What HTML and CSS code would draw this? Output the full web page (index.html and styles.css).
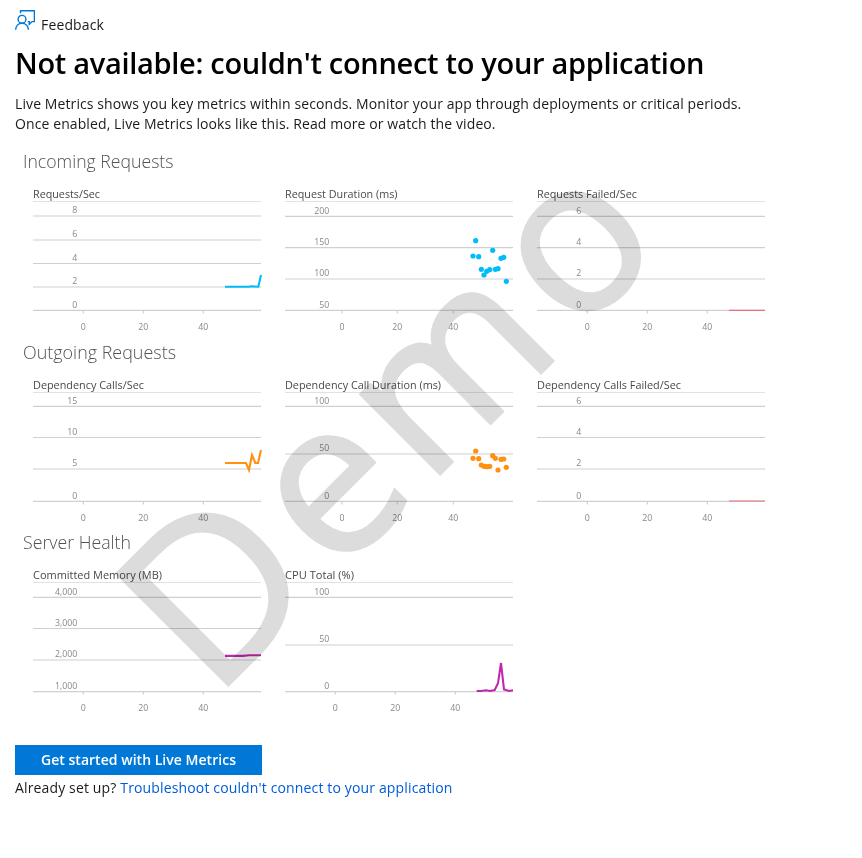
FILE: index.html
```html
<!DOCTYPE html>
<html lang="en">
<head>
<meta charset="utf-8">
<title>Live Metrics</title>
<link rel="stylesheet" href="styles.css">
</head>
<body>
<main class="page">
  <div class="feedback">
    <svg class="feedback-icon" width="20" height="20" viewBox="0 0 20 20"><path d="M5.5 3.3V.7h13.9v10.9h-2.4l-2.700 2.700v-2.700h-1.600"/><circle cx="7" cy="9.3" r="3.9"/><path d="M.6 19.8c.3-4 3-6.5 6.4-6.5s6.100 2.500 6.400 6.500"/></svg>
    <span class="feedback-label">Feedback</span>
  </div>
  <h1 class="title">Not available: couldn't connect to your application</h1>
  <p class="intro">Live Metrics shows you key metrics within seconds. Monitor your app through deployments or critical periods.<br>Once enabled, Live Metrics looks like this. Read more or watch the video.</p>
  <div class="demo" id="demo"></div>
  <button class="cta">Get started with Live Metrics</button>
  <p class="help">Already set up? <a class="help-link">Troubleshoot couldn't connect to your application</a></p>
</main>
<script src="charts.js"></script>
</body>
</html>
```
FILE: styles.css
```css
* { box-sizing: border-box; }
body { margin: 0; background: #fff; color: #1b1b1b; font: 14px/20px "Open Sans", "Noto Sans", sans-serif; }
.page { padding: 10px 15px; }
.feedback { display: flex; height: 28px; gap: 6px; }
.feedback-icon { flex: none; fill: none; stroke: #0078d4; stroke-width: 1.4; }
.feedback-label { margin-top: 5px; letter-spacing: 0.15px; }
.title { margin: 4px 0 0; height: 42px; font-size: 29px; line-height: 42px; font-weight: 600; letter-spacing: -0.3px; color: #000; white-space: nowrap; }
.intro { margin: 10px 0 0; letter-spacing: 0.1px; white-space: nowrap; }
.demo { position: relative; width: 760px; height: 575px; margin-top: 12px; padding-left: 8px; }
.section { height: 191px; }
.section + .section { height: 190px; }
.section-title { display: block; height: 38px; }
.section-title text { font-size: 18px; font-weight: 300; fill: #505357; }
.charts { display: flex; gap: 24px; padding-left: 10px; }
.chart, .section-title, .watermark { overflow: visible; }
.chart { flex: none; }
.chart-name { font-size: 11px; fill: #46494d; }
.top-line { stroke: #e2e2e2; }
.grid-line { stroke: #d0d0d0; stroke-width: 1.2; }
.tick { font-size: 8.8px; fill: #85898c; }
.series { fill: none; stroke-width: 2; }
.watermark { position: absolute; left: 0; top: 0; mix-blend-mode: multiply; pointer-events: none; }
.watermark text { font-size: 216px; fill: #dcdcdc; stroke: #dcdcdc; stroke-width: 3; }
.watermark .cap { font-size: 222px; stroke-width: 2; }
.watermark .wide { font-size: 210px; }
.cta { display: block; width: 247px; height: 30px; margin-top: 24px; padding: 0; border: 0; background: #0078d7; color: #fff; font: 600 14px/30px "Open Sans", sans-serif; letter-spacing: 0.03px; }
.help { margin: 3px 0 0; letter-spacing: 0.145px; white-space: nowrap; }
.help-link { color: #015cda; }
```
FILE: charts.js
```js
const smallX = [50.3, 110.3, 170.3];
const wideX = [57, 112.3, 168.3];
const sections = [
  { name: "Incoming Requests", width: 150.5, charts: [
    { name: "Requests/Sec", width: 67, ys: [32, 56, 79.5, 103, 126.3], labels: ["8", "6", "4", "2", "0"], xs: smallX, color: "#00bcf8", line: "192,102.7 216,102.7 218,102.3 225.3,102.7 228,91" },
    { name: "Request Duration (ms)", width: 112.5, ys: [32.3, 63.6, 95, 126.3], labels: ["200", "150", "100", "50"], xs: wideX, color: "#00bcf8", dots: [[188,72],[190.7,56.7],[193.7,72.7],[196.3,85.3],[199,91],[201.7,87.3],[204.7,85.7],[207.7,66.3],[210.3,85.3],[213,84.7],[216,74.3],[218.7,73.3],[221.3,97.3]] },
    { name: "Requests Failed/Sec", width: 100, ys: [32.3, 63.6, 95, 126.3], labels: ["6", "4", "2", "0"], xs: smallX, color: "#e8707c", thin: true, line: "192,126.3 228,126.3" } ] },
  { name: "Outgoing Requests", width: 153, charts: [
    { name: "Dependency Calls/Sec", width: 111, ys: [31.4, 62.5, 94, 126.3], labels: ["15", "10", "5", "0"], xs: smallX, color: "#ff9010", line: "192,88 213,88 216,95 219,80 222.3,88 225,88 228,75" },
    { name: "Dependency Call Duration (ms)", width: 156, ys: [31.4, 79, 126.3], labels: ["100", "50", "0"], xs: wideX, color: "#ff9010", dots: [[188,83.3],[190.7,76],[193.7,83.7],[196.3,90],[199,91.3],[202,91.7],[204.7,91.3],[207.7,80.7],[210.3,83.3],[213,95],[216,84.3],[218.7,84],[221.3,92.3]] },
    { name: "Dependency Calls Failed/Sec", width: 144, ys: [31.4, 62.5, 94, 126.3], labels: ["6", "4", "2", "0"], xs: smallX, color: "#e8707c", thin: true, line: "192,126 228,126" } ] },
  { name: "Server Health", width: 108, charts: [
    { name: "Committed Memory (MB)", width: 129, ys: [32.4, 63.5, 95, 126.7], labels: ["4,000", "3,000", "2,000", "1,000"], xs: smallX, color: "#bd28ae", line: "192,90.9 210,90.9 216,90.3 228,90.3" },
    { name: "CPU Total (%)", width: 69, ys: [32.4, 80, 126.7], labels: ["100", "50", "0"], xs: smallX, color: "#bd28ae", line: "191.7,126 196,126 201,125.3 205,126 209.7,125 213,118.3 216,98 219,124.5 224.3,126 228,125.3" } ] }
];

function chart(c) {
  let s = `<svg class="chart" width="228" height="152"><text class="chart-name" x="0" y="14.4" textLength="${c.width}" lengthAdjust="spacingAndGlyphs">${c.name}</text><line class="top-line" x1="0" x2="228" y1="17.5" y2="17.5"/>`;
  c.ys.forEach((y, i) => {
    s += `<line class="grid-line" x1="0" x2="228" y1="${y}" y2="${y}"/><text class="tick" x="44.4" y="${y - 2.8}" text-anchor="end">${c.labels[i]}</text>`;
  });
  c.xs.forEach((x, i) => {
    s += `<line class="grid-line" x1="${x}" x2="${x}" y1="126" y2="129.5"/><text class="tick" x="${x}" y="145.6" text-anchor="middle">${i * 20}</text>`;
  });
  if (c.line) s += `<polyline class="series" points="${c.line}" style="stroke:${c.color};stroke-width:${c.thin ? 1.2 : 2.1}"/>`;
  (c.dots || []).forEach(d => { s += `<circle cx="${d[0]}" cy="${d[1]}" r="2.6" fill="${c.color}"/>`; });
  return s + "</svg>";
}

document.getElementById("demo").innerHTML = sections.map(s =>
  `<section class="section"><svg class="section-title" width="240" height="38"><text x="0" y="22.4" textLength="${s.width}" lengthAdjust="spacingAndGlyphs">${s.name}</text></svg><div class="charts">${s.charts.map(chart).join("")}</div></section>`
).join("") + `<svg class="watermark" width="760" height="575"><g transform="translate(213.5 539.500) rotate(-45)"><text class="cap" x="-22">D</text><text x="151">e</text><text class="wide" x="281.500">m</text><text x="491">o</text></g></svg>`;
```
